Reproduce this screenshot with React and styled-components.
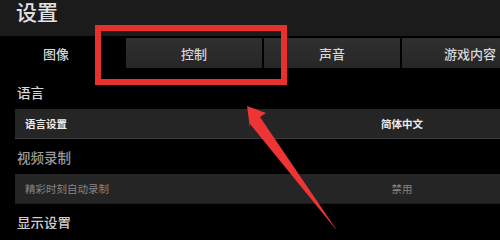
import React from "react";
import styled, { createGlobalStyle } from "styled-components";

const GlobalStyle = createGlobalStyle`
  html, body {
    margin: 0;
    padding: 0;
    background: #000;
  }
  body {
    font-family: "Noto Sans CJK SC", "Noto Sans", sans-serif;
    overflow: hidden;
  }
`;

const Page = styled.div`
  position: relative;
  width: 500px;
  height: 229px;
  overflow: hidden;
  background: #000;
`;

const Header = styled.div`
  height: 36px;
  background: #1b1b1b;
  padding-left: 16px;
`;

const Title = styled.h1`
  margin: 0;
  font-size: 21px;
  line-height: 22px;
  font-weight: 500;
  color: #e2e2e2;
`;

const TabBar = styled.div`
  display: grid;
  grid-template-columns: repeat(4, 136px);
  gap: 2px;
  margin: 2px 0 0 -12px;
  height: 30px;
`;

const Tab = styled.div`
  display: flex;
  align-items: center;
  justify-content: center;
  font-size: 13px;
  font-weight: 500;
  color: #d6d6d6;
  background: ${(p) =>
    p.active ? "transparent" : "linear-gradient(#303030, #262626)"};
`;

const Content = styled.div`
  padding: 6px 0 0 15px;
`;

const Heading = styled.div`
  height: 35px;
  display: flex;
  align-items: center;
  padding-left: 2px;
  font-size: 13.5px;
  font-weight: 500;
  color: ${(p) => p.color || "#d8d8d8"};
`;

const Row = styled.div`
  display: grid;
  grid-template-columns: 1fr 196px;
  align-items: center;
  height: 29px;
  background: #252525;
  border-bottom: 1px solid ${(p) => (p.dim ? "#1c1c1c" : "#3c3c3c")};
  font-size: 10.5px;
  color: ${(p) => (p.dim ? "#858585" : "#ececec")};
  font-weight: ${(p) => (p.dim ? 400 : 700)};
`;

const RowLabel = styled.span`
  padding-left: 10px;
`;

const RowValue = styled.span`
  text-align: center;
`;

const Highlight = styled.div`
  position: absolute;
  left: 95px;
  top: 25px;
  width: 192px;
  height: 60px;
  box-sizing: border-box;
  border: 6px solid #e8312f;
  pointer-events: none;
`;

const Overlay = styled.svg`
  position: absolute;
  left: 0;
  top: 0;
  pointer-events: none;
`;

const Arrow = () => (
  <Overlay width="500" height="229" viewBox="0 0 500 229">
    <polygon
      points="247,106 266,113 260,117 338,232 250,124 250,128"
      fill="#ee3434"
    />
  </Overlay>
);

export default function App() {
  return (
    <>
      <GlobalStyle />
      <Page>
        <Header>
          <Title>设置</Title>
        </Header>
        <TabBar>
          <Tab active>图像</Tab>
          <Tab>控制</Tab>
          <Tab>声音</Tab>
          <Tab>游戏内容</Tab>
        </TabBar>
        <Content>
          <Heading>语言</Heading>
          <Row>
            <RowLabel>语言设置</RowLabel>
            <RowValue>简体中文</RowValue>
          </Row>
          <Heading color="#9a9a9a">视频录制</Heading>
          <Row dim>
            <RowLabel>精彩时刻自动录制</RowLabel>
            <RowValue>禁用</RowValue>
          </Row>
          <Heading color="#cfcfcf">显示设置</Heading>
        </Content>
        <Highlight />
        <Arrow />
      </Page>
    </>
  );
}
